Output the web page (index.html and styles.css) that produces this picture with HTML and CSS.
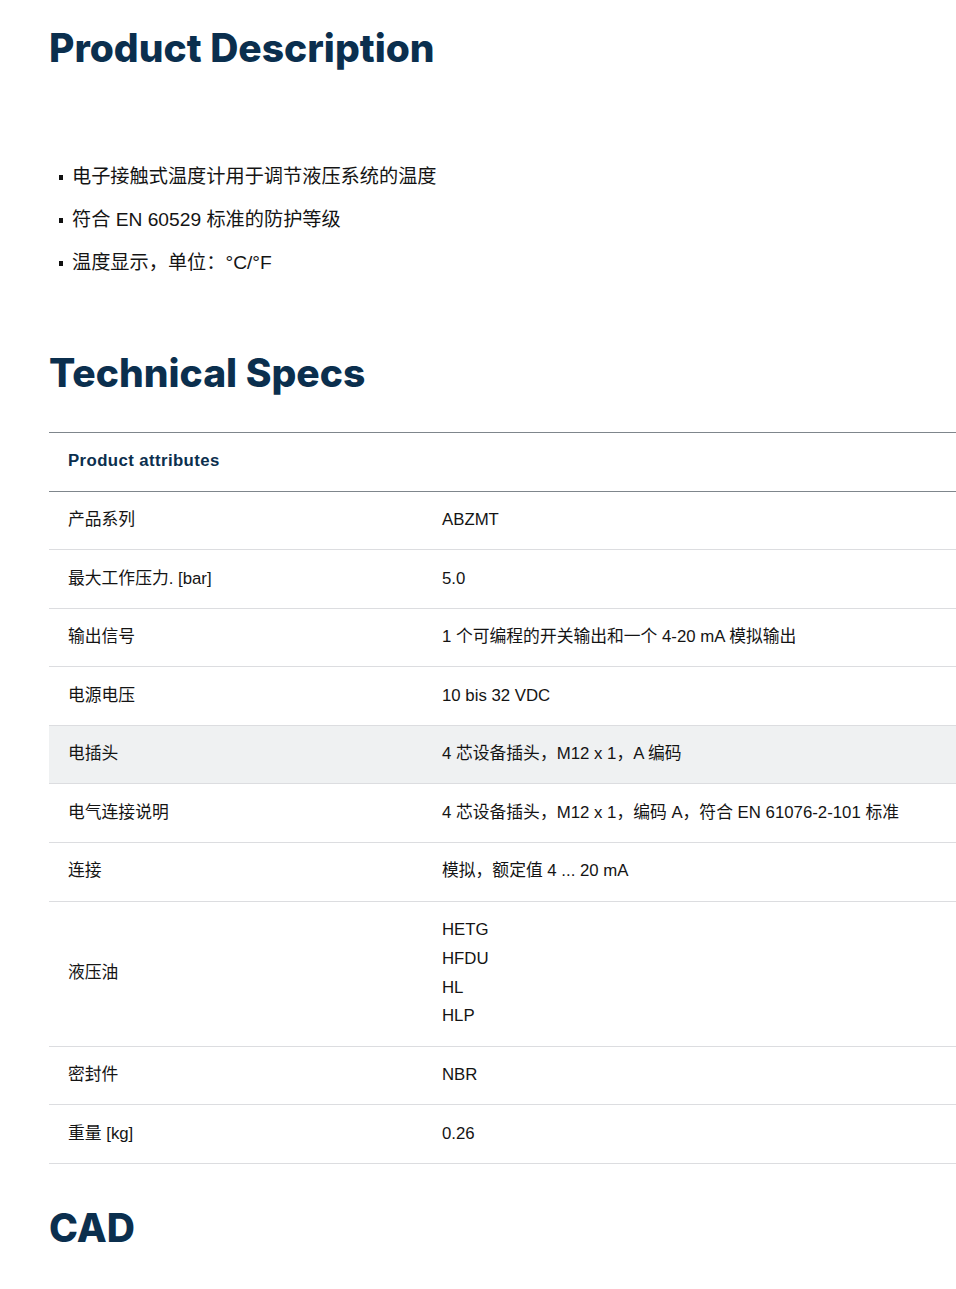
FILE: index.html
```html
<!DOCTYPE html>
<html lang="zh-CN">

<head>
  <meta charset="UTF-8">
  <meta name="viewport" content="width=device-width, initial-scale=1.0">
  <title>Product Description</title>
  <link rel="stylesheet" href="styles.css">
</head>

<body>
  <div class="page">
    <h2 class="section-title">Product Description</h2>

    <ul class="features">
      <li>电子接触式温度计用于调节液压系统的温度</li>
      <li>符合 EN 60529 标准的防护等级</li>
      <li>温度显示，单位：°C/°F</li>
    </ul>

    <h2 class="section-title specs-title">Technical Specs</h2>

    <div class="specs">
      <div class="specs-head">Product attributes</div>

      <div class="spec-row">
        <div class="spec-name">产品系列</div>
        <div class="spec-value">ABZMT</div>
      </div>
      <div class="spec-row">
        <div class="spec-name">最大工作压力. [bar]</div>
        <div class="spec-value">5.0</div>
      </div>
      <div class="spec-row">
        <div class="spec-name">输出信号</div>
        <div class="spec-value">1 个可编程的开关输出和一个 4-20 mA 模拟输出</div>
      </div>
      <div class="spec-row">
        <div class="spec-name">电源电压</div>
        <div class="spec-value">10 bis 32 VDC</div>
      </div>
      <div class="spec-row active">
        <div class="spec-name">电插头</div>
        <div class="spec-value">4 芯设备插头，M12 x 1，A 编码</div>
      </div>
      <div class="spec-row">
        <div class="spec-name">电气连接说明</div>
        <div class="spec-value">4 芯设备插头，M12 x 1，编码 A，符合 EN 61076-2-101 标准</div>
      </div>
      <div class="spec-row">
        <div class="spec-name">连接</div>
        <div class="spec-value">模拟，额定值 4 ... 20 mA</div>
      </div>
      <div class="spec-row">
        <div class="spec-name">液压油</div>
        <div class="spec-value">
          <div>HETG</div>
          <div>HFDU</div>
          <div>HL</div>
          <div>HLP</div>
        </div>
      </div>
      <div class="spec-row">
        <div class="spec-name">密封件</div>
        <div class="spec-value">NBR</div>
      </div>
      <div class="spec-row">
        <div class="spec-name">重量 [kg]</div>
        <div class="spec-value">0.26</div>
      </div>
    </div>

    <h2 class="section-title cad-title">CAD</h2>
  </div>
</body>

</html>
```

FILE: styles.css
```css
body {
  margin: 0;
  font-family: 'Liberation Sans', 'Noto Sans CJK SC', sans-serif;
  color: #141414;
  background: #fff;
  overflow-x: hidden;
}

.page {
  padding: 24px 0 40px 49px;
}

.section-title {
  font-family: 'Inter', 'Liberation Sans', sans-serif;
  font-weight: 800;
  font-size: 39px;
  line-height: 48px;
  color: #0b2f4e;
  margin: 0;
}

.features {
  list-style: none;
  margin: 93px 0 0;
  padding: 0;
}

.features li {
  position: relative;
  font-size: 19.2px;
  line-height: 24px;
  padding-left: 23px;
  margin-bottom: 19px;
}

.features li::before {
  content: "";
  position: absolute;
  left: 10px;
  top: 10px;
  width: 4px;
  height: 5px;
  background: #111;
}

.specs-title {
  margin-top: 74px;
}

.specs {
  margin-top: 35px;
  border-top: 1px solid #7f868c;
}

.specs-head {
  font-weight: bold;
  font-size: 16.8px;
  letter-spacing: 0.4px;
  color: #0b2f4e;
  line-height: 28.8px;
  padding: 14.4px 19px;
  border-bottom: 1px solid #7f868c;
}

.spec-row {
  display: grid;
  grid-template-columns: 374px 1fr;
  border-bottom: 1px solid #dcdde0;
  font-size: 16.8px;
  line-height: 28.8px;
}

.spec-row.active {
  background: #eff1f2;
}

.spec-name,
.spec-value {
  padding: 14.4px 19px;
}

.spec-name {
  align-self: center;
}

.cad-title {
  margin-top: 40px;
}
```
